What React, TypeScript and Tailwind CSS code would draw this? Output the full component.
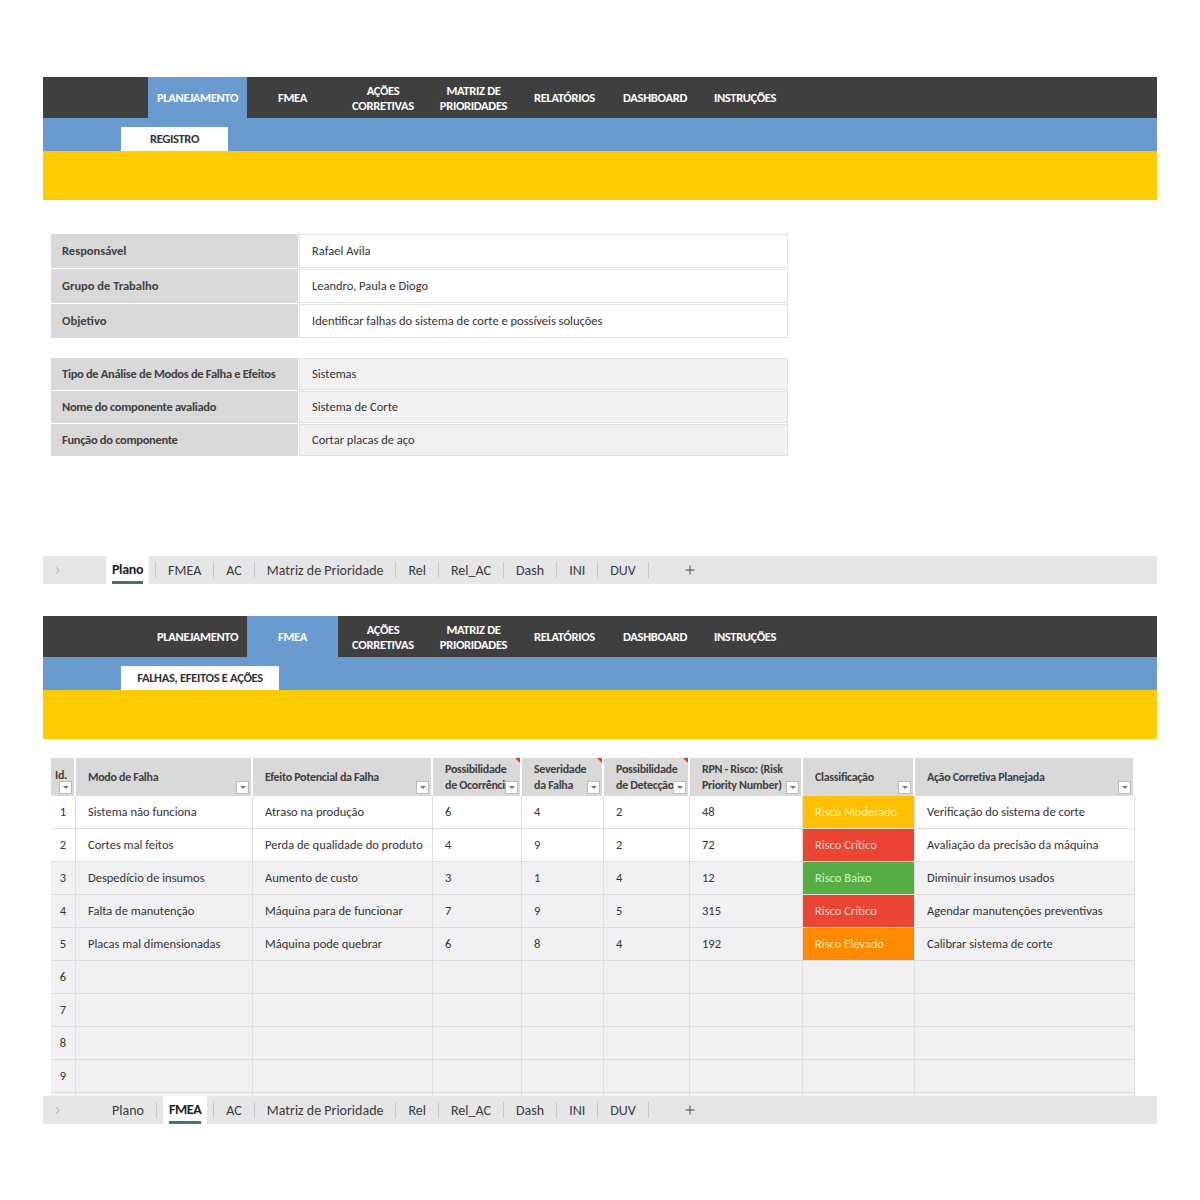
import { ChevronRight, Plus } from "lucide-react";

type NavItem = { lines: string[]; w: string };

const navItems: NavItem[] = [
    { lines: ["PLANEJAMENTO"], w: "w-[99px]" },
    { lines: ["FMEA"], w: "w-[91px]" },
    { lines: ["AÇÕES", "CORRETIVAS"], w: "w-[90px]" },
    { lines: ["MATRIZ DE", "PRIORIDADES"], w: "w-[91px]" },
    { lines: ["RELATÓRIOS"], w: "w-[91px]" },
    { lines: ["DASHBOARD"], w: "w-[90px]" },
    { lines: ["INSTRUÇÕES"], w: "w-[90px]" },
];

const sheetTabs = ["Plano", "FMEA", "AC", "Matriz de Prioridade", "Rel", "Rel_AC", "Dash", "INI", "DUV"];

// Header with dark nav, blue band with sub tab and yellow strip
function SheetHeader({ active, sub, subW }: { active: number; sub: string; subW: string }) {
    return (
        <div>
            <div className="h-[41px] bg-[#3f3f3f] flex pl-[105px]">
                {navItems.map((item, i) => (
                    <div
                        key={i}
                        className={`${item.w} h-full flex flex-col items-center justify-center text-white font-bold text-[12.5px] leading-[15px] tracking-tight ${i === active ? "bg-[#6a9bd0]" : ""}`}
                    >
                        {item.lines.map((l) => (
                            <span key={l}>{l}</span>
                        ))}
                    </div>
                ))}
            </div>
            <div className="h-[33px] bg-[#6a9bd0] flex items-end pl-[78px]">
                <div className={`${subW} h-[24px] bg-white flex items-center justify-center text-[12.5px] font-bold text-[#333] tracking-tight`}>
                    {sub}
                </div>
            </div>
            <div className="h-[49px] bg-[#ffcc00]" />
        </div>
    );
}

function TabBar({ active }: { active: number }) {
    return (
        <div className="h-[28px] bg-[#e6e6e9] flex items-stretch text-[14px] text-[#3a3a3a]">
            <div className="w-[63px] flex items-center pl-[8px] text-[#9a9a9a]">
                <ChevronRight className="w-[13px] h-[13px]" strokeWidth={1.5} />
            </div>
            {sheetTabs.map((t, i) => (
                <div key={t} className="flex items-center">
                    <div
                        className={`h-full flex items-center px-[6px] ${i === active ? "bg-white font-bold text-[#1e1e1e] rounded-t-[3px]" : ""}`}
                    >
                        <span className={`${i === active ? "border-b-[3px] border-[#3f7a5d] pb-[1px] mt-[3px] tracking-tight" : ""}`}>{t}</span>
                    </div>
                    <div className="w-px h-[16px] bg-[#c9c9cc] mx-[6px]" />
                </div>
            ))}
            <div className="flex items-center pl-[28px] pr-[40px] text-[#333]">
                <Plus className="w-[14px] h-[14px]" strokeWidth={1.5} />
            </div>
        </div>
    );
}

const planRows1 = [
    ["Responsável", "Rafael Avila"],
    ["Grupo de Trabalho", "Leandro, Paula e Diogo"],
    ["Objetivo", "Identificar falhas do sistema de corte e possíveis soluções"],
];
const planRows2 = [
    ["Tipo de Análise de Modos de Falha e Efeitos", "Sistemas"],
    ["Nome do componente avaliado", "Sistema de Corte"],
    ["Função do componente", "Cortar placas de aço"],
];

function FilterBtn() {
    return (
        <div className="absolute right-[2px] bottom-[2px] w-[13px] h-[13px] bg-white border border-[#b9b9b9] flex items-center justify-center">
            <div className="w-0 h-0 border-l-[3px] border-r-[3px] border-t-[3px] border-l-transparent border-r-transparent border-t-[#777]" />
        </div>
    );
}

function RedMark() {
    return <div className="absolute right-0 top-0 w-0 h-0 border-l-[5px] border-l-transparent border-t-[5px] border-t-[#e03b2c]" />;
}

type Col = { lines: string[]; w: string; mark?: boolean };

const cols: Col[] = [
    { lines: ["Id."], w: "w-[25px]" },
    { lines: ["Modo de Falha"], w: "w-[177px]" },
    { lines: ["Efeito Potencial da Falha"], w: "w-[180px]" },
    { lines: ["Possibilidade", "de Ocorrência"], w: "w-[89px]", mark: true },
    { lines: ["Severidade", "da Falha"], w: "w-[82px]", mark: true },
    { lines: ["Possibilidade", "de Detecção"], w: "w-[86px]", mark: true },
    { lines: ["RPN - Risco: (Risk", "Priority Number)"], w: "w-[113px]" },
    { lines: ["Classificação"], w: "w-[112px]" },
    { lines: ["Ação Corretiva Planejada"], w: "w-[220px]" },
];

const riskStyles: Record<string, string> = {
    "Risco Moderado": "bg-[#ffc000] text-[#fff2a8]",
    "Risco Crítico": "bg-[#ea4533] text-[#ffd0cc]",
    "Risco Baixo": "bg-[#55ad44] text-[#d4f5c8]",
    "Risco Elevado": "bg-[#ff8a00] text-[#ffe7b3]",
};

const fmeaRows = [
    ["1", "Sistema não funciona", "Atraso na produção", "6", "4", "2", "48", "Risco Moderado", "Verificação do sistema de corte"],
    ["2", "Cortes mal feitos", "Perda de qualidade do produto", "4", "9", "2", "72", "Risco Crítico", "Avaliação da precisão da máquina"],
    ["3", "Despedício de insumos", "Aumento de custo", "3", "1", "4", "12", "Risco Baixo", "Diminuir insumos usados"],
    ["4", "Falta de manutenção", "Máquina para de funcionar", "7", "9", "5", "315", "Risco Crítico", "Agendar manutenções preventivas"],
    ["5", "Placas mal dimensionadas", "Máquina pode quebrar", "6", "8", "4", "192", "Risco Elevado", "Calibrar sistema de corte"],
    ["6", "", "", "", "", "", "", "", ""],
    ["7", "", "", "", "", "", "", "", ""],
    ["8", "", "", "", "", "", "", "", ""],
    ["9", "", "", "", "", "", "", "", ""],
];

export default function App() {
    return (
        <div className="w-[1200px] h-[1200px] bg-white pt-[77px] px-[43px] font-['Carlito','Lato',sans-serif] text-[#333]">
            {/* Plano sheet */}
            <SheetHeader active={0} sub="REGISTRO" subW="w-[107px]" />
            <div className="h-[356px] pt-[34px] pl-[8px]">
                <div className="w-[737px] flex flex-col gap-px">
                    {planRows1.map(([k, v]) => (
                        <div key={k} className="flex h-[34px] gap-px">
                            <div className="w-[247px] bg-[#d9d9d9] flex items-center pl-[11px] text-[12.5px] font-bold text-[#404040]">{k}</div>
                            <div className="flex-1 bg-white border border-[#e2e2e2] flex items-center pl-[12px] text-[12.5px]">{v}</div>
                        </div>
                    ))}
                </div>
                <div className="w-[737px] flex flex-col gap-px mt-[20px]">
                    {planRows2.map(([k, v]) => (
                        <div key={k} className="flex h-[32px] gap-px">
                            <div className="w-[247px] bg-[#d9d9d9] flex items-center pl-[11px] text-[12.5px] font-bold text-[#404040] whitespace-nowrap tracking-tight">{k}</div>
                            <div className="flex-1 bg-[#f2f2f2] border border-[#e2e2e2] flex items-center pl-[12px] text-[12.5px]">{v}</div>
                        </div>
                    ))}
                </div>
            </div>
            <TabBar active={0} />

            {/* FMEA sheet */}
            <div className="mt-[32px]">
                <SheetHeader active={1} sub="FALHAS, EFEITOS E AÇÕES" subW="w-[158px]" />
                <div className="pt-[19px] pl-[8px]">
                    <div className="flex h-[38px] w-[1084px]">
                        {cols.map((c, i) => (
                            <div
                                key={i}
                                className={`${c.w} relative bg-[#d9d9d9] border-r-2 border-white overflow-hidden flex flex-col justify-center ${i === 0 ? "pl-[4px] justify-start pt-[9px]" : "pl-[12px]"} text-[12px] leading-[16px] font-bold text-[#404040] whitespace-nowrap tracking-tight`}
                            >
                                {c.lines.map((l) => (
                                    <span key={l}>{l}</span>
                                ))}
                                {c.mark && <RedMark />}
                                <FilterBtn />
                            </div>
                        ))}
                    </div>
                    {fmeaRows.map((r, ri) => (
                        <div key={ri} className={`flex h-[33px] border-b border-[#dedede] ${ri < 2 ? "bg-white" : "bg-[#f1f0f2]"} w-[1084px]`}>
                            {r.map((cell, ci) => {
                                const risk = ci === 7 && riskStyles[cell];
                                return (
                                    <div
                                        key={ci}
                                        className={`${cols[ci].w} ${ci === 0 ? "justify-center" : "pl-[12px]"} flex items-center text-[12.5px] border-r border-[#dedede] whitespace-nowrap ${risk ? risk : ""}`}
                                    >
                                        {cell}
                                    </div>
                                );
                            })}
                        </div>
                    ))}
                    <div className="flex h-[3px] w-[1084px] bg-[#f1f0f2]">
                        {cols.map((c, i) => (
                            <div key={i} className={`${c.w} border-r border-[#dedede]`} />
                        ))}
                    </div>
                </div>
                <TabBar active={1} />
            </div>
        </div>
    );
}
